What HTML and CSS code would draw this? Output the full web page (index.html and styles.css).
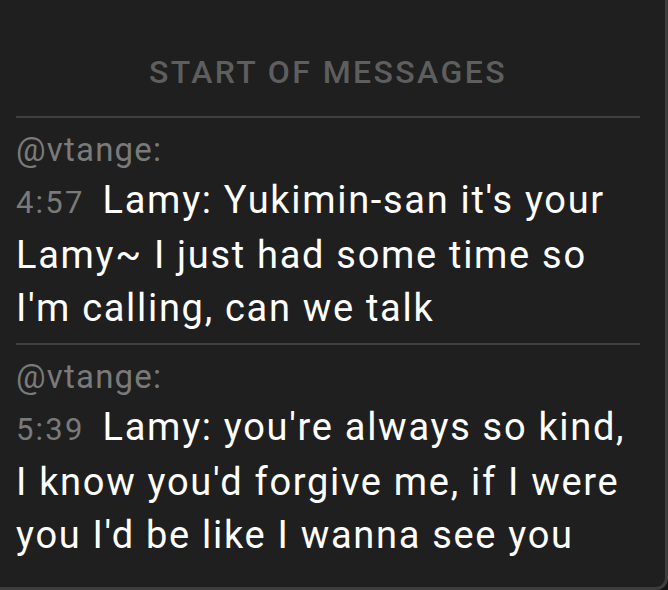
FILE: index.html
```html
<!DOCTYPE html>
<html>
<head>
<meta charset="utf-8">
<link rel="stylesheet" href="styles.css">
</head>
<body>
<div class="panel">
  <div class="start">START OF MESSAGES</div>
  <div class="msg">
    <div class="author">@vtange:</div>
    <div class="text"><span class="time">4:57</span>Lamy: Yukimin-san it's your Lamy~ I just had some time so I'm calling, can we talk</div>
  </div>
  <div class="msg">
    <div class="author">@vtange:</div>
    <div class="text"><span class="time">5:39</span>Lamy: you're always so kind, I know you'd forgive me, if I were you I'd be like I wanna see you</div>
  </div>
</div>
</body>
</html>
```
FILE: styles.css
```css
html, body {
  margin: 0;
  padding: 0;
  background: #141414;
}
.panel {
  box-sizing: border-box;
  width: 668px;
  height: 590px;
  background: #1f1f1f;
  border-right: 3px solid #3d3d3d;
  border-bottom: 3px solid #3d3d3d;
  border-bottom-right-radius: 12px;
  padding: 0 25px 0 16px;
  font-family: Roboto, "Liberation Sans", sans-serif;
  overflow: hidden;
}
.start {
  padding-top: 54px;
  height: 62px;
  text-align: center;
  color: #5e5e5e;
  font-size: 32px;
  font-weight: 500;
  letter-spacing: 2.4px;
  line-height: 36px;
}
.msg {
  border-top: 2px solid #404040;
  padding-top: 8px;
  padding-bottom: 8px;
}
.author {
  color: #7a7a7a;
  font-size: 33px;
  letter-spacing: 1.2px;
  line-height: 48px;
}
.text {
  color: #ffffff;
  font-size: 38px;
  letter-spacing: 1.7px;
  line-height: 53px;
}
.time {
  color: #7a7a7a;
  font-size: 31px;
  letter-spacing: 2.2px;
  margin-right: 18px;
}
```
